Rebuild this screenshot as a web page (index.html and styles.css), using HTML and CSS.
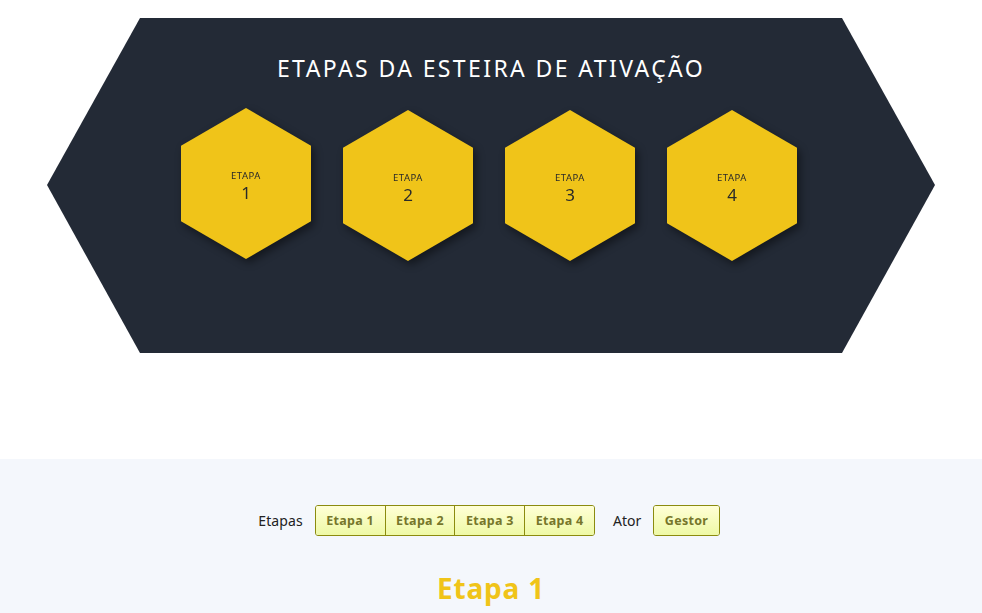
FILE: index.html
```html
<!DOCTYPE html>
<html lang="pt">
<head>
<meta charset="utf-8">
<link rel="stylesheet" href="styles.css">
</head>
<body>
<section class="hero">
  <div class="big-hex">
    <h1 class="title">ETAPAS DA ESTEIRA DE ATIVAÇÃO</h1>
    <div class="hex-row">
      <div class="hex-wrap first"><div class="hex"><span class="hex-label">ETAPA</span><span class="hex-num">1</span></div></div>
      <div class="hex-wrap"><div class="hex"><span class="hex-label">ETAPA</span><span class="hex-num">2</span></div></div>
      <div class="hex-wrap"><div class="hex"><span class="hex-label">ETAPA</span><span class="hex-num">3</span></div></div>
      <div class="hex-wrap"><div class="hex"><span class="hex-label">ETAPA</span><span class="hex-num">4</span></div></div>
    </div>
  </div>
</section>
<section class="panel">
  <div class="controls">
    <span class="ctl-label">Etapas</span>
    <div class="btn-group">
      <button class="btn">Etapa 1</button>
      <button class="btn">Etapa 2</button>
      <button class="btn">Etapa 3</button>
      <button class="btn">Etapa 4</button>
    </div>
    <span class="ctl-label ator">Ator</span>
    <div class="btn-group">
      <button class="btn">Gestor</button>
    </div>
  </div>
  <h2 class="stage-title">Etapa 1</h2>
</section>
</body>
</html>
```

FILE: styles.css
```css
* { box-sizing: border-box; }
html, body { margin: 0; padding: 0; }
body {
  font-family: "Noto Sans", "Open Sans", sans-serif;
  background: #ffffff;
  width: 982px;
  height: 613px;
  overflow: hidden;
}
.hero {
  padding-top: 18px;
  height: 459px;
}
.big-hex {
  width: 888px;
  height: 335px;
  margin: 0 auto;
  background: #232a36;
  clip-path: polygon(93px 0, 795px 0, 888px 167px, 795px 335px, 93px 335px, 0 167px);
  display: flex;
  flex-direction: column;
  align-items: center;
  padding-top: 35px;
}
.title {
  margin: 0;
  color: #ffffff;
  font-weight: 400;
  font-size: 23px;
  line-height: 30px;
  letter-spacing: 2.4px;
}
.hex-row {
  display: flex;
  gap: 32px;
  margin-top: 26px;
  margin-right: 4px;
}
.hex-wrap {
  filter: drop-shadow(3px 4px 4px rgba(0,0,0,0.45));
  margin-top: 1px;
}
.hex-wrap.first { margin-top: -1px; }
.hex {
  width: 130px;
  height: 151px;
  background: #f0c419;
  clip-path: polygon(50% 0, 100% 25%, 100% 75%, 50% 100%, 0 75%, 0 25%);
  display: flex;
  flex-direction: column;
  align-items: center;
  justify-content: center;
  color: #2a2a2a;
  padding-top: 6px;
}
.hex-label {
  font-size: 9.5px;
  line-height: 12px;
  letter-spacing: 0.5px;
}
.hex-num {
  font-size: 17px;
  line-height: 22px;
}
.panel {
  background: #f4f7fc;
  height: 154px;
  padding-top: 46px;
  display: flex;
  flex-direction: column;
  align-items: center;
}
.controls {
  display: flex;
  align-items: center;
  height: 30px;
  margin-right: 4px;
}
.ctl-label {
  font-size: 14px;
  letter-spacing: 0.1px;
  color: #222;
  margin-right: 12px;
}
.ator { margin-left: 18px; letter-spacing: 0; }
.btn-group {
  display: flex;
  border: 1px solid #8b8b0f;
  border-radius: 3px;
  overflow: hidden;
  height: 31px;
}
.btn {
  font-family: inherit;
  font-size: 12.5px;
  font-weight: 700;
  letter-spacing: 0.3px;
  color: #76762a;
  background: linear-gradient(#ffffd6, #eef9a6);
  border: 0;
  border-left: 1px solid #8b8b0f;
  padding: 0 10.5px;
  height: 29px;
  margin: 0;
}
.btn:first-child { border-left: 0; }
.stage-title {
  margin: 35px 0 0;
  font-size: 28px;
  line-height: 36px;
  font-weight: 700;
  letter-spacing: 0.8px;
  color: #f0c419;
}
```
